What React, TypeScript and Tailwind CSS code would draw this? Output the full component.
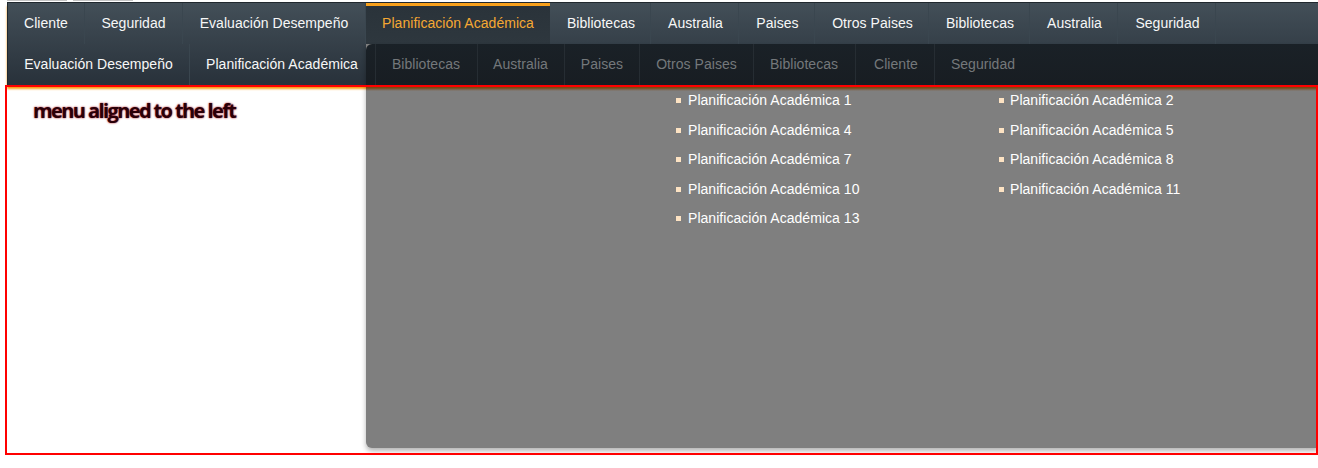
const top = [
  ["Cliente", 77],
  ["Seguridad", 98],
  ["Evaluación Desempeño", 183],
];
const top2 = [
  ["Bibliotecas", 101],
  ["Australia", 88],
  ["Paises", 76],
  ["Otros Paises", 114],
  ["Bibliotecas", 101],
  ["Australia", 88],
  ["Seguridad", 98],
];
const sub = [
  ["Bibliotecas", 102, "pr-[1px]"],
  ["Australia", 87, "pr-[1px]"],
  ["Paises", 75, ""],
  ["Otros Paises", 114, ""],
  ["Bibliotecas", 102, "pr-[1px]"],
  ["Cliente", 79, "pl-[2px]"],
];
const links = [
  ["Planificación Académica 1", "Planificación Académica 2"],
  ["Planificación Académica 4", "Planificación Académica 5"],
  ["Planificación Académica 7", "Planificación Académica 8"],
  ["Planificación Académica 10", "Planificación Académica 11"],
  ["Planificación Académica 13", ""],
];

function Item({ label, width, cls = "" }: { label: string; width: number; cls?: string }) {
  return (
    <a style={{ width }} className={"flex h-full shrink-0 items-center justify-center border-r border-[#3a464f] text-[14px] tracking-[0.04px] " + cls}>
      {label}
    </a>
  );
}

function Link({ label, second }: { label: string; second: boolean }) {
  if (!label) return <div />;
  return (
    <div className={second ? "flex h-[29.5px] items-center gap-[6px] text-[14px] tracking-[0.04px] text-white" : "flex h-[29.5px] items-center gap-[7px] text-[14px] tracking-[0.04px] text-white"}>
      <span className={second ? "ml-[1px] h-[5px] w-[5px] bg-[#fde3c3]" : "h-[5px] w-[5px] bg-[#fde3c3]"} />
      {label}
    </div>
  );
}

export default function App() {
  return (
    <div className="relative h-[468px] w-[1318px] overflow-hidden bg-white font-['Liberation_Sans',Arial,sans-serif]">
      <div className="ml-[7px] flex h-[2px] gap-[6px]">
        <div className="h-px w-[60px] bg-[#c4c4c4]" />
        <div className="h-px w-[60px] bg-[#c4c4c4]" />
      </div>
      <nav className="relative z-0 ml-[7px] h-[83px] border-t border-l border-[#20282e] bg-gradient-to-b from-[#434f58] to-[#28313a] shadow-[0_4px_2px_#f99a10]">
        <div className="flex h-[41px] text-[#f7f7f7]">
          {top.map(([l, w]) => (
            <Item key={l} label={l as string} width={w as number} />
          ))}
          <a className="flex h-full w-[184px] shrink-0 items-center justify-center border-t-[3px] border-[#f9a11b] bg-gradient-to-b from-[#2a333a] to-[#2e373e] pb-[3px] text-[14px] tracking-[0.04px] text-[#f5a833]">
            Planificación Académica
          </a>
          {top2.map(([l, w], i) => (
            <Item key={i} label={l as string} width={w as number} cls="pl-[2px]" />
          ))}
        </div>
        <div className="flex h-[41px] text-[#f7f7f7]">
          <Item label="Evaluación Desempeño" width={182} />
          <a className="flex h-full w-[184px] shrink-0 items-center justify-center text-[14px] tracking-[0.04px]">
            Planificación Académica
          </a>
        </div>
      </nav>
      <div className="relative z-10 ml-[5px] h-[370px] border-2 border-[#ff0000] px-[26px] py-[11px]">
        <h2 className="font-['Open_Sans',sans-serif] text-[20px] leading-[26px] font-bold tracking-[-1.6px] text-[#2a0008] [text-shadow:0_0_2px_#a00010]">
          menu aligned to the left
        </h2>
      </div>
      <div className="absolute top-[44px] left-[366px] z-[5] h-[404px] w-[952px] rounded-bl-[6px] bg-[#7f7f7f] shadow-[0_3px_5px_rgba(0,0,0,0.3)]">
        <div className="flex h-[41px] rounded-tl-[6px] bg-gradient-to-b from-[#1a2127] to-[#181d22] text-[#74787b]">
          <div className="w-[10px] border-r border-[#262d33]" />
          {sub.map(([l, w, c], i) => (
            <a key={i} style={{ width: w as number }} className={"flex h-full shrink-0 items-center justify-center border-r border-[#262d33] text-[14px] tracking-[0.04px] " + c}>
              {l}
            </a>
          ))}
          <a className="flex h-full w-[96px] shrink-0 items-center justify-center text-[14px] tracking-[0.04px]">Seguridad</a>
        </div>
        <div className="relative">
          <div className="absolute inset-x-0 top-0 h-[6px] bg-gradient-to-b from-[#7a4a10] via-[#7a4a10] to-[#7f7f7f]" />
          <div className="relative grid grid-cols-[322px_322px] pt-[1px] pl-[310px]">
            {links.flat().map((l, i) => (
              <Link key={i} label={l} second={i % 2 === 1} />
            ))}
          </div>
        </div>
      </div>
    </div>
  );
}
